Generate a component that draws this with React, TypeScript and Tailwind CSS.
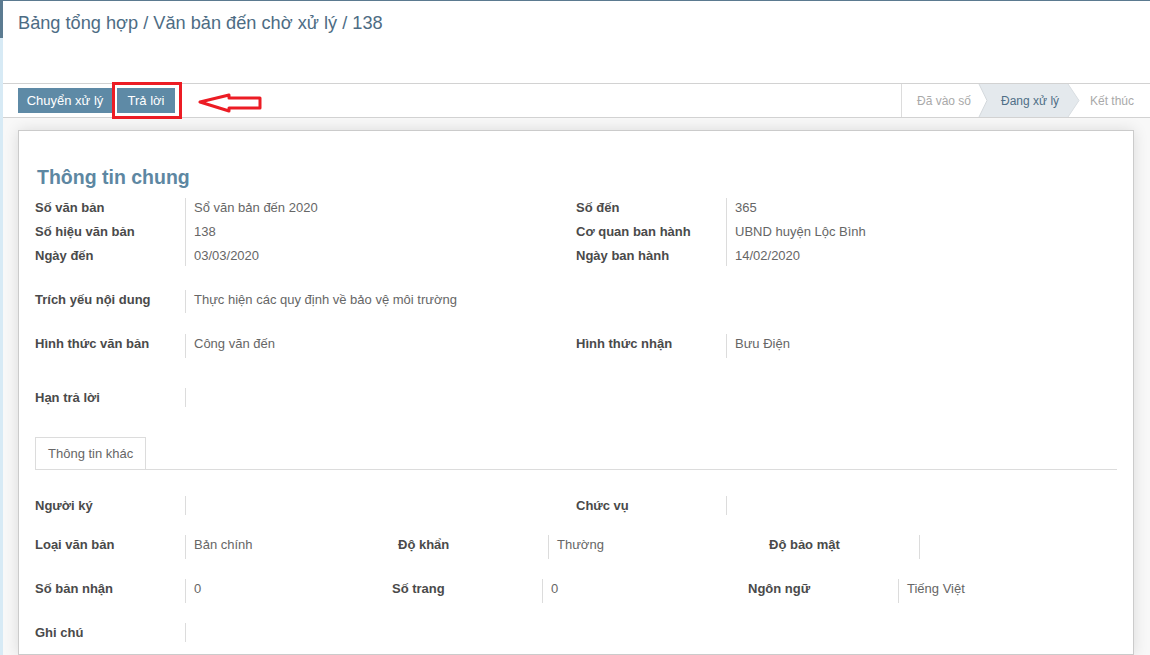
import React from "react";

type Cell = { label: string; value?: string; valueW?: number };

function Row({ cells, h, cls = "" }: { cells: Cell[]; h: number; cls?: string }) {
  return (
    <div className={`flex items-start ${cls}`} style={{ height: h }}>
      {cells.map((c, i) => (
        <React.Fragment key={i}>
          <div className="w-[150px] shrink-0 text-[13px] font-bold leading-[20px] text-[#4a4a4a]">{c.label}</div>
          <div
            className={`border-l border-[#dcdcdc] pl-[8px] text-[13px] leading-[20px] text-[#666] ${
              c.valueW ? "shrink-0" : "flex-1"
            }`}
            style={{ height: h, width: c.valueW }}
          >
            {c.value}
          </div>
        </React.Fragment>
      ))}
    </div>
  );
}

function Col({ rows }: { rows: { label: string; value?: string; h: number }[] }) {
  return (
    <div className="w-[541px] shrink-0 flex flex-col">
      {rows.map((r) => (
        <Row key={r.label} cells={[{ label: r.label, value: r.value }]} h={r.h} />
      ))}
    </div>
  );
}

function StatusBar() {
  return (
    <div className="relative ml-auto flex h-full w-[249px] border-l border-[#dcdcdc] text-[12px]">
      <svg className="absolute inset-0" width="249" height="33" viewBox="0 0 249 33">
        <polygon points="77,0 166,0 177,16.5 166,33 77,33 85,16.5" fill="#e4e9ed" />
        <polyline points="77,0 85,16.5 77,33" fill="none" stroke="#d3d8dc" strokeWidth="1" />
        <polyline points="166,0 177,16.5 166,33" fill="none" stroke="#d8dde1" strokeWidth="1" />
      </svg>
      <div className="relative flex w-[76px] items-center pl-[15px] text-[#a9a9a9]">Đã vào số</div>
      <div className="relative flex w-[100px] items-center pl-[23px] text-[#4f6f87]">Đang xử lý</div>
      <div className="relative flex items-center pl-[12px] text-[#a9a9a9]">Kết thúc</div>
    </div>
  );
}

export default function App() {
  return (
    <div className="flex h-[655px] w-[1150px] flex-col overflow-hidden border-t border-[#5b7a90] bg-[#f8f8f8] font-[family-name:Liberation_Sans,Arial,sans-serif]">
      <div className="flex min-h-0 flex-1">
        <div className="flex w-[3px] shrink-0 flex-col">
          <div className="h-[37px] bg-[#5b7b91]" />
          <div className="flex-1 bg-[#d7eaf5]" />
        </div>
        <div className="flex min-w-0 flex-1 flex-col">
          {/* control panel */}
          <div className="h-[83px] border-b border-[#d2d2d2] bg-white pl-[15px] pt-[10px]">
            <div className="text-[18.2px] leading-[24px] text-[#4d6c84]">
              Bảng tổng hợp / Văn bản đến chờ xử lý / 138
            </div>
          </div>

          {/* status bar */}
          <div className="relative flex h-[34px] items-center border-b border-[#d2d2d2] bg-white pl-[15px]">
            <button className="h-[25px] w-[94px] bg-[#5e8aa6] text-[13px] text-white">Chuyển xử lý</button>
            <button className="ml-[5px] h-[25px] w-[58px] bg-[#5e8aa6] text-[13px] text-white">Trả lời</button>
            <div className="pointer-events-none absolute left-[109px] top-[-2px] h-[37px] w-[70px] border-[3px] border-[#ec1c24]" />
            <svg className="absolute left-[195px] top-[8px]" width="66" height="22" viewBox="0 0 66 22">
              <polygon
                points="2,10 31,3 31,6 62,6 62,16 31,16 31,19"
                fill="#fff"
                stroke="#ec1c24"
                strokeWidth="3"
                strokeLinejoin="round"
              />
            </svg>
            <StatusBar />
          </div>

          {/* sheet */}
          <div className="ml-[15px] mr-[16px] mt-[12px] flex-1 border border-[#cbcbcb] bg-white px-[16px] pt-[34px] shadow-[0_0_14px_rgba(0,0,0,0.12)]">
            <h1 className="h-[24px] pl-[2px] text-[19.5px] font-bold leading-[25px] text-[#5d87a2]">Thông tin chung</h1>

            <div className="mt-[9px] flex">
              <Col
                rows={[
                  { label: "Số văn bản", value: "Sổ văn bản đến 2020", h: 24 },
                  { label: "Số hiệu văn bản", value: "138", h: 24 },
                  { label: "Ngày đến", value: "03/03/2020", h: 20 },
                ]}
              />
              <Col
                rows={[
                  { label: "Số đến", value: "365", h: 24 },
                  { label: "Cơ quan ban hành", value: "UBND huyện Lộc Bình", h: 24 },
                  { label: "Ngày ban hành", value: "14/02/2020", h: 20 },
                ]}
              />
            </div>

            <Row cls="mt-[24px]" h={23} cells={[{ label: "Trích yếu nội dung", value: "Thực hiện các quy định về bảo vệ môi trường" }]} />

            <div className="mt-[21px] flex">
              <Col rows={[{ label: "Hình thức văn bản", value: "Công văn đến", h: 24 }]} />
              <Col rows={[{ label: "Hình thức nhận", value: "Bưu Điện", h: 24 }]} />
            </div>

            <Row cls="mt-[30px]" h={19} cells={[{ label: "Hạn trả lời" }]} />

            <div className="mt-[30px] flex border-b border-[#dcdcdc]">
              <div className="flex h-[32px] w-[111px] items-center border-l border-r border-t border-[#dcdcdc] pl-[12px] text-[13px] text-[#666]">
                Thông tin khác
              </div>
            </div>

            <div className="mt-[26px] flex">
              <Col rows={[{ label: "Người ký", h: 19 }]} />
              <Col rows={[{ label: "Chức vụ", h: 19 }]} />
            </div>

            <Row
              cls="mt-[20px]"
              h={24}
              cells={[
                { label: "Loại văn bản", value: "Bản chính", valueW: 213 },
                { label: "Độ khẩn", value: "Thường", valueW: 221 },
                { label: "Độ bảo mật" },
              ]}
            />

            <Row
              cls="mt-[20px]"
              h={24}
              cells={[
                { label: "Số bản nhận", value: "0", valueW: 207 },
                { label: "Số trang", value: "0", valueW: 206 },
                { label: "Ngôn ngữ", value: "Tiếng Việt" },
              ]}
            />

            <Row cls="mt-[20px]" h={19} cells={[{ label: "Ghi chú" }]} />
          </div>
        </div>
      </div>
    </div>
  );
}
